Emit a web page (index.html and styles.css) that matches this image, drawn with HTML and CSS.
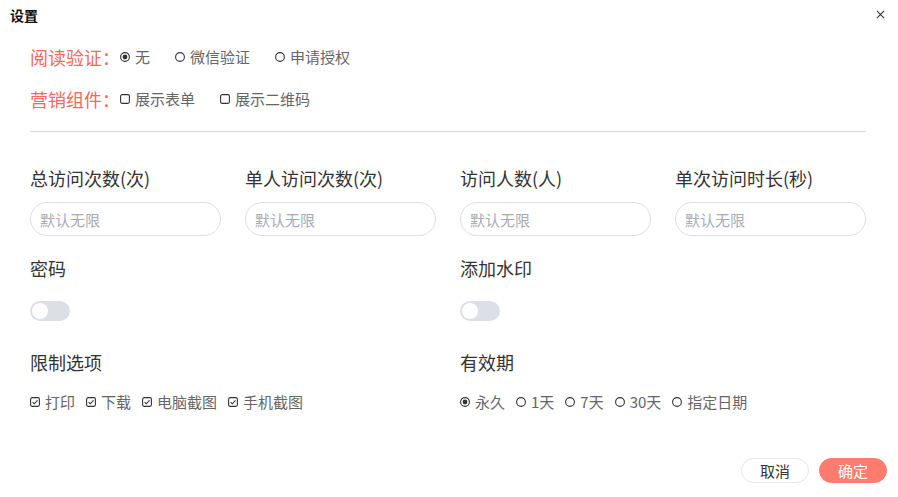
FILE: index.html
```html
<!DOCTYPE html>
<html lang="zh-CN">
<head>
<meta charset="utf-8">
<title>设置</title>
<link rel="stylesheet" href="styles.css">
</head>
<body>
<div class="dialog">
  <div class="header">
    <span class="title">设置</span>
    <svg class="close" width="10" height="10" viewBox="0 0 10 10"><path d="M1 1L9 9M9 1L1 9" stroke="#333" stroke-width="1.2"/></svg>
  </div>
  <div class="body">
    <div class="optrow">
      <span class="redlabel">阅读验证：</span>
      <div class="opts wide">
        <span class="opt"><svg class="ico" viewBox="0 0 10 10"><circle cx="5" cy="5" r="4.4" fill="none" stroke="#333" stroke-width="1.1"/><circle cx="5" cy="5" r="2.4" fill="#333"/></svg>无</span>
        <span class="opt"><svg class="ico" viewBox="0 0 10 10"><circle cx="5" cy="5" r="4.4" fill="none" stroke="#333" stroke-width="1.1"/></svg>微信验证</span>
        <span class="opt"><svg class="ico" viewBox="0 0 10 10"><circle cx="5" cy="5" r="4.4" fill="none" stroke="#333" stroke-width="1.1"/></svg>申请授权</span>
      </div>
    </div>
    <div class="optrow second">
      <span class="redlabel">营销组件：</span>
      <div class="opts wide">
        <span class="opt"><svg class="ico" viewBox="0 0 10 10"><rect x="0.6" y="0.6" width="8.8" height="8.8" rx="1.6" fill="none" stroke="#333" stroke-width="1.1"/></svg>展示表单</span>
        <span class="opt"><svg class="ico" viewBox="0 0 10 10"><rect x="0.6" y="0.6" width="8.8" height="8.8" rx="1.6" fill="none" stroke="#333" stroke-width="1.1"/></svg>展示二维码</span>
      </div>
    </div>
    <div class="divider"></div>

    <div class="grid">
      <div class="field">
        <div class="label">总访问次数(次)</div>
        <input class="input" placeholder="默认无限">
      </div>
      <div class="field">
        <div class="label">单人访问次数(次)</div>
        <input class="input" placeholder="默认无限">
      </div>
      <div class="field">
        <div class="label">访问人数(人)</div>
        <input class="input" placeholder="默认无限">
      </div>
      <div class="field">
        <div class="label">单次访问时长(秒)</div>
        <input class="input" placeholder="默认无限">
      </div>

      <div class="field half sec">
        <div class="label">密码</div>
        <div class="switch"><span class="knob"></span></div>
      </div>
      <div class="field half sec">
        <div class="label">添加水印</div>
        <div class="switch"><span class="knob"></span></div>
      </div>

      <div class="field half sec3">
        <div class="label">限制选项</div>
        <div class="opts narrow">
          <span class="opt"><svg class="ico" viewBox="0 0 10 10"><rect x="0.6" y="0.6" width="8.8" height="8.8" rx="1.6" fill="none" stroke="#333" stroke-width="1.1"/><path d="M2.6 5.1L4.3 6.8L7.5 3.4" fill="none" stroke="#333" stroke-width="1.1"/></svg>打印</span>
          <span class="opt"><svg class="ico" viewBox="0 0 10 10"><rect x="0.6" y="0.6" width="8.8" height="8.8" rx="1.6" fill="none" stroke="#333" stroke-width="1.1"/><path d="M2.6 5.1L4.3 6.8L7.5 3.4" fill="none" stroke="#333" stroke-width="1.1"/></svg>下载</span>
          <span class="opt"><svg class="ico" viewBox="0 0 10 10"><rect x="0.6" y="0.6" width="8.8" height="8.8" rx="1.6" fill="none" stroke="#333" stroke-width="1.1"/><path d="M2.6 5.1L4.3 6.8L7.5 3.4" fill="none" stroke="#333" stroke-width="1.1"/></svg>电脑截图</span>
          <span class="opt"><svg class="ico" viewBox="0 0 10 10"><rect x="0.6" y="0.6" width="8.8" height="8.8" rx="1.6" fill="none" stroke="#333" stroke-width="1.1"/><path d="M2.6 5.1L4.3 6.8L7.5 3.4" fill="none" stroke="#333" stroke-width="1.1"/></svg>手机截图</span>
        </div>
      </div>
      <div class="field half sec3">
        <div class="label">有效期</div>
        <div class="opts narrow">
          <span class="opt"><svg class="ico" viewBox="0 0 10 10"><circle cx="5" cy="5" r="4.4" fill="none" stroke="#333" stroke-width="1.1"/><circle cx="5" cy="5" r="2.4" fill="#333"/></svg>永久</span>
          <span class="opt"><svg class="ico" viewBox="0 0 10 10"><circle cx="5" cy="5" r="4.4" fill="none" stroke="#333" stroke-width="1.1"/></svg>1天</span>
          <span class="opt"><svg class="ico" viewBox="0 0 10 10"><circle cx="5" cy="5" r="4.4" fill="none" stroke="#333" stroke-width="1.1"/></svg>7天</span>
          <span class="opt"><svg class="ico" viewBox="0 0 10 10"><circle cx="5" cy="5" r="4.4" fill="none" stroke="#333" stroke-width="1.1"/></svg>30天</span>
          <span class="opt"><svg class="ico" viewBox="0 0 10 10"><circle cx="5" cy="5" r="4.4" fill="none" stroke="#333" stroke-width="1.1"/></svg>指定日期</span>
        </div>
      </div>
    </div>
  </div>
  <div class="footer">
    <button class="btn cancel">取消</button>
    <button class="btn ok">确定</button>
  </div>
</div>
</body>
</html>
```

FILE: styles.css
```css
* { box-sizing: border-box; }
html, body {
  margin: 0;
  padding: 0;
  background: #fff;
}
body {
  font-family: "Microsoft YaHei", "Noto Sans CJK SC", "Noto Sans", sans-serif;
  color: #333;
  width: 898px;
  height: 497px;
  overflow: hidden;
}
.dialog {
  display: flex;
  flex-direction: column;
  height: 497px;
}
.header {
  height: 34px;
  display: flex;
  align-items: center;
  justify-content: space-between;
  padding: 0 13px 4px 10px;
}
.title {
  font-size: 14px;
  font-weight: bold;
  color: #111;
  line-height: 20px;
}
.close {
  width: 9px;
  height: 9px;
  margin-top: -2px;
}
.body {
  padding: 0 32px 0 30px;
  flex: 1;
}
.optrow {
  display: flex;
  align-items: center;
  height: 30px;
  margin-top: 8px;
}
.optrow.second {
  margin-top: 12px;
}
.redlabel {
  width: 90px;
  font-size: 18px;
  line-height: 30px;
  color: #f7675b;
}
.opts {
  display: flex;
  align-items: center;
  font-size: 15px;
  color: #666;
  line-height: 20px;
}
.opts.wide { gap: 25px; }
.opts.narrow { gap: 11px; height: 20px; margin-top: 18px; }
.opt {
  display: flex;
  align-items: center;
  gap: 5px;
}
.ico {
  width: 10px;
  height: 10px;
  flex: none;
}
.divider {
  height: 1px;
  background: #dcdcdc;
  margin-top: 17px;
}
.grid {
  display: grid;
  grid-template-columns: repeat(4, 1fr);
  column-gap: 24px;
  margin-top: 34px;
}
.field {
  display: flex;
  flex-direction: column;
  align-items: flex-start;
}
.field.half { grid-column: span 2; }
.field.sec { margin-top: 20px; }
.field.sec3 { margin-top: 29px; }
.label {
  font-size: 18px;
  line-height: 24px;
  color: #333;
}
.input {
  margin-top: 12px;
  width: 100%;
  height: 34px;
  border: 1px solid #dcdfe6;
  border-radius: 17px;
  padding: 0 0 0 9px;
  font-family: inherit;
  font-size: 15px;
  color: #333;
  outline: none;
  background: #fff;
}
.input::placeholder { color: #a8abb2; }
.switch {
  margin-top: 21px;
  width: 40px;
  height: 20px;
  border-radius: 10px;
  background: #dcdfe6;
  display: flex;
  align-items: center;
  padding-left: 2px;
}
.knob {
  width: 16px;
  height: 16px;
  border-radius: 50%;
  background: #fff;
}
.footer {
  display: flex;
  justify-content: flex-end;
  gap: 10px;
  padding: 0 11px 14px 0;
}
.btn {
  width: 68px;
  height: 25px;
  border-radius: 13px;
  font-family: inherit;
  font-size: 15px;
  line-height: 23px;
  padding: 0;
  cursor: pointer;
}
.btn.cancel {
  background: #fff;
  border: 1px solid #e6e6e6;
  color: #333;
}
.btn.ok {
  background: #ff7b6e;
  border: 1px solid #ff7b6e;
  color: #fff;
}
```
